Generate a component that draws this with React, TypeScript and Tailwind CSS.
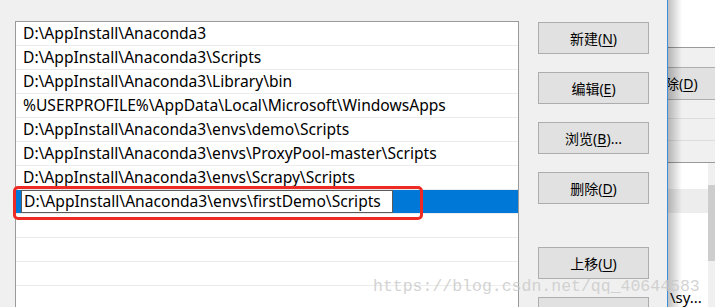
import React from 'react';

const paths = [
  'D:\\AppInstall\\Anaconda3',
  'D:\\AppInstall\\Anaconda3\\Scripts',
  'D:\\AppInstall\\Anaconda3\\Library\\bin',
  '%USERPROFILE%\\AppData\\Local\\Microsoft\\WindowsApps',
  'D:\\AppInstall\\Anaconda3\\envs\\demo\\Scripts',
  'D:\\AppInstall\\Anaconda3\\envs\\ProxyPool-master\\Scripts',
  'D:\\AppInstall\\Anaconda3\\envs\\Scrapy\\Scripts',
];

const font = { fontFamily: '"Noto Sans", "Noto Sans CJK SC", sans-serif' };

function Btn({ label, hot, rest, className = '' }: { label?: string; hot?: string; rest?: string; className?: string }) {
  return (
    <div
      className={`flex h-[32px] w-[111px] shrink-0 items-center justify-center border border-[#adadad] bg-[#e1e1e1] text-[14px] text-black ${className}`}
    >
      {label && (
        <span>
          {label}(<span className="underline underline-offset-2">{hot}</span>){rest}
        </span>
      )}
    </div>
  );
}

export default function App() {
  return (
    <div className="relative flex h-[307px] w-[715px] overflow-hidden bg-[#f0f0f0]" style={font}>
      {/* dialog */}
      <div className="flex h-full w-[668px] shrink-0 border-r border-[#3c8fd8] bg-[#f0f0f0] pl-[15px] pt-[21px]">
        <div className="h-[300px] w-[504px] shrink-0 border border-[#9a9a9a] bg-white">
          {paths.map((p) => (
            <div
              key={p}
              className="flex h-[24px] items-center border-b border-[#ececec] pl-[7px] text-[15.6px] leading-none text-black"
            >
              {p}
            </div>
          ))}
          <div className="flex h-[24px] border-b border-[#ececec] bg-[#0078d7]">
            <div className="ml-[5px] flex h-full w-[372px] items-center border border-[#5a5a5a] bg-white pl-[2px] text-[15.6px] leading-none text-black">
              D:\AppInstall\Anaconda3\envs\firstDemo\Scripts
            </div>
          </div>
          {[0, 1, 2, 3].map((i) => (
            <div key={i} className="h-[24px] border-b border-[#ececec]" />
          ))}
        </div>
        <div className="ml-[19px] flex flex-col pt-[1px]">
          <Btn label="新建" hot="N" />
          <Btn label="编辑" hot="E" className="mt-[18px]" />
          <Btn label="浏览" hot="B" rest="..." className="mt-[18px]" />
          <Btn label="删除" hot="D" className="mt-[18px]" />
          <Btn label="上移" hot="U" className="mt-[43px]" />
          <Btn className="mt-[18px]" />
        </div>
      </div>

      {/* window behind */}
      <div className="relative flex h-full flex-1 flex-col overflow-hidden">
        <div className="h-[48px] border-b border-[#9a9a9a] bg-white" />
        <div className="h-[19px]" />
        <div className="flex h-[33px] items-center border-y border-[#adadad] bg-[#e1e1e1] text-[14px] text-black">
          <span className="-ml-[3px]">
            除(<span className="underline underline-offset-2">D</span>)
          </span>
        </div>
        <div className="h-[19px] border-b border-[#dcdcdc]" />
        <div className="h-[22px] border-b border-[#dcdcdc]" />
        <div className="h-[22px] border-b border-[#9a9a9a]" />
        <div className="flex flex-1">
          <div className="flex flex-1 flex-col bg-white">
            <div className="h-[26px]" />
            <div className="h-[24px] bg-[#ededed]" />
            <div className="flex-1" />
            <div className="pb-[2px] pl-[2px] text-[15px] leading-none text-black">\sy...</div>
          </div>
          <div className="flex w-[7px] flex-col bg-[#f0f0f0]">
            <div className="h-[22px]" />
            <div className="h-[76px] bg-[#cdcdcd]" />
          </div>
        </div>
        <div className="pointer-events-none absolute inset-y-0 left-0 w-[14px] bg-gradient-to-r from-black/25 to-transparent" />
      </div>

      {/* red annotation */}
      <div className="pointer-events-none absolute left-[13px] top-[186px] h-[34px] w-[410px] rounded-[5px] border-[3px] border-[#ee2a24]" />

      {/* watermark */}
      <div
        className="pointer-events-none absolute left-[373px] top-[279px] text-[16.5px] leading-none text-[#c8c8c8]/80"
        style={{ fontFamily: '"Liberation Mono", monospace' }}
      >
        https://blog.csdn.net/qq_40644583
      </div>
    </div>
  );
}
